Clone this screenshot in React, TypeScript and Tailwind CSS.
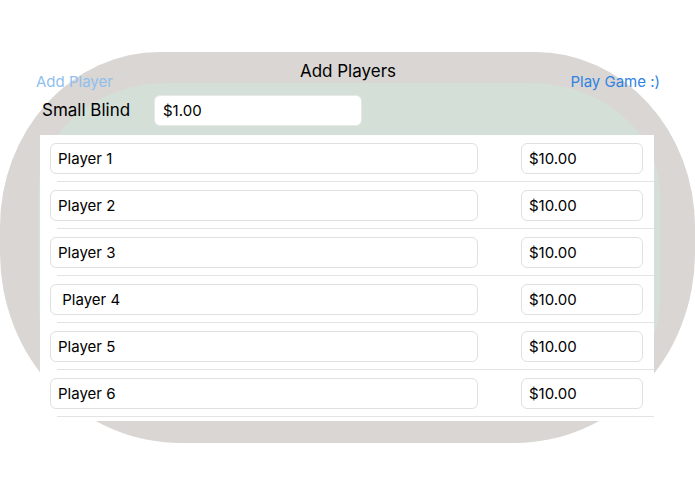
import React from "react";

const players = [
  { name: "Player 1", chips: "$10.00" },
  { name: "Player 2", chips: "$10.00" },
  { name: "Player 3", chips: "$10.00" },
  { name: "\u00a0Player 4", chips: "$10.00" },
  { name: "Player 5", chips: "$10.00" },
  { name: "Player 6", chips: "$10.00" },
];

function Field({ value, className }: { value: string; className?: string }) {
  return (
    <div
      className={`flex h-[31px] items-center rounded-[6px] border border-[#e0e0e0] bg-white pl-[7px] pr-2 pt-[1px] text-[15px] text-black ${className ?? ""}`}
    >
      {value}
    </div>
  );
}

export default function App() {
  return (
    <div className="relative h-[494px] w-[695px] overflow-hidden bg-white font-['Inter','Liberation_Sans',sans-serif]">
      {/* table backdrop */}
      <div className="absolute left-0 top-[52px] h-[391px] w-[695px] rounded-[160px_160px_180px_180px/175px_175px_190px_190px] bg-[#d9d6d3] p-[31px_35px_31px_38px]">
        <div className="h-full w-full rounded-[130px/110px] bg-[#d4dfd8]" />
      </div>

      <div className="relative flex flex-col">
        <div className="grid grid-cols-[1fr_auto_1fr] pl-[36px] pr-[35px]">
          <button className="justify-self-start pt-[73px] text-[15px] leading-[18px] text-[#8fbfee]">Add Player</button>
          <h1 className="pt-[61px] text-[17px] leading-[20px] text-black">Add Players</h1>
          <button className="justify-self-end pt-[73px] text-[15px] leading-[18px] text-[#2f82e2]">Play Game :)</button>
        </div>

        <div className="mt-[4px] flex items-center">
          <span className="ml-[42px] w-[112px] pt-[1px] text-[17px] text-black">Small Blind</span>
          <Field value="$1.00" className="w-[208px] border-[#e8e8e8] pl-[8px]" />
        </div>

        <div className="mx-[40px] mt-[9px] w-[614px] bg-white pb-[4px]">
          {players.map((p) => (
            <div key={p.name} className="flex h-[47px] flex-col">
              <div className="flex flex-1 items-center justify-between pl-[10px] pr-[11px] pt-[1px]">
                <Field value={p.name} className="w-[428px]" />
                <Field value={p.chips} className="w-[122px]" />
              </div>
              <div className="ml-[17px] h-px bg-[#e3e3e3]" />
            </div>
          ))}
        </div>
      </div>
    </div>
  );
}
